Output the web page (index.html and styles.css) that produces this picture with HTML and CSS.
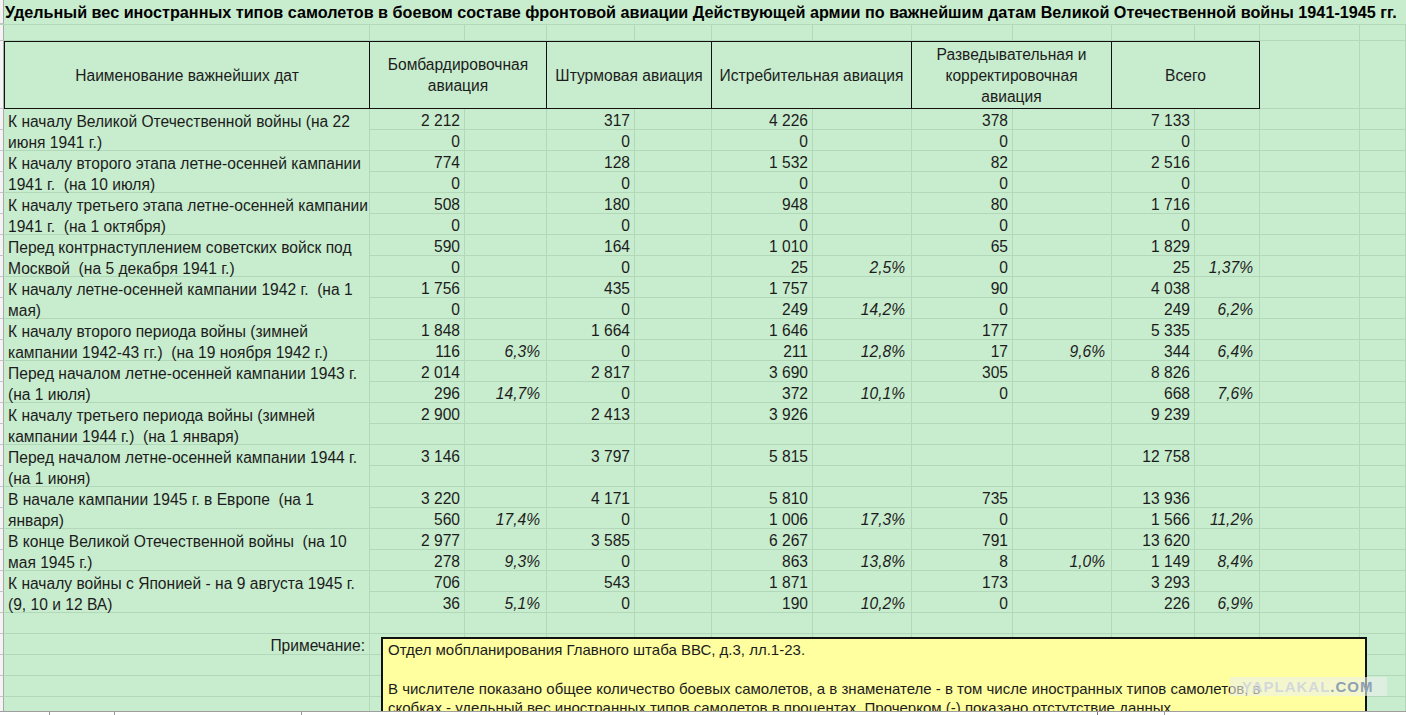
FILE: index.html
```html
<!DOCTYPE html>
<html lang="ru">
<head>
<meta charset="utf-8">
<title>Удельный вес иностранных типов самолетов</title>
<link rel="stylesheet" href="styles.css">
</head>
<body>
<div class="screen">
  <div class="sheet">
    <div class="row title-row">
      <div class="strip"></div>
      <div class="title">Удельный вес иностранных типов самолетов в боевом составе фронтовой авиации Действующей армии по важнейшим датам Великой Отечественной войны 1941-1945 гг.</div>
    </div>
    <div class="row r16">
      <div class="strip"></div><div class="c"></div><div class="c"></div><div class="c"></div><div class="c"></div><div class="c"></div><div class="c"></div><div class="c"></div><div class="c"></div><div class="c"></div><div class="c"></div><div class="c"></div><div class="c"></div><div class="c"></div>
    </div>
    <div class="row head">
      <div class="strip"></div>
      <div class="h first">Наименование важнейших дат</div>
      <div class="h s2">Бомбардировочная<br>авиация</div>
      <div class="h s2">Штурмовая авиация</div>
      <div class="h s2">Истребительная авиация</div>
      <div class="h s2">Разведывательная и<br>корректировочная<br>авиация</div>
      <div class="h s2">Всего</div>
      <div class="c"></div><div class="c"></div>
    </div>

    <div class="grp">
      <div class="strip"></div><div class="lab">К началу Великой Отечественной войны (на 22<br>июня 1941 г.)</div>
      <div class="c n">2 212</div><div class="c p"></div><div class="c n">317</div><div class="c p"></div><div class="c n">4 226</div><div class="c p"></div><div class="c n">378</div><div class="c p"></div><div class="c n">7 133</div><div class="c p"></div><div class="c"></div><div class="c"></div>
      <div class="strip"></div>
      <div class="c n">0</div><div class="c p"></div><div class="c n">0</div><div class="c p"></div><div class="c n">0</div><div class="c p"></div><div class="c n">0</div><div class="c p"></div><div class="c n">0</div><div class="c p"></div><div class="c"></div><div class="c"></div>
    </div>

    <div class="grp">
      <div class="strip"></div><div class="lab">К началу второго этапа летне-осенней кампании<br>1941 г.&nbsp; (на 10 июля)</div>
      <div class="c n">774</div><div class="c p"></div><div class="c n">128</div><div class="c p"></div><div class="c n">1 532</div><div class="c p"></div><div class="c n">82</div><div class="c p"></div><div class="c n">2 516</div><div class="c p"></div><div class="c"></div><div class="c"></div>
      <div class="strip"></div>
      <div class="c n">0</div><div class="c p"></div><div class="c n">0</div><div class="c p"></div><div class="c n">0</div><div class="c p"></div><div class="c n">0</div><div class="c p"></div><div class="c n">0</div><div class="c p"></div><div class="c"></div><div class="c"></div>
    </div>

    <div class="grp">
      <div class="strip"></div><div class="lab">К началу третьего этапа летне-осенней кампании<br>1941 г.&nbsp; (на 1 октября)</div>
      <div class="c n">508</div><div class="c p"></div><div class="c n">180</div><div class="c p"></div><div class="c n">948</div><div class="c p"></div><div class="c n">80</div><div class="c p"></div><div class="c n">1 716</div><div class="c p"></div><div class="c"></div><div class="c"></div>
      <div class="strip"></div>
      <div class="c n">0</div><div class="c p"></div><div class="c n">0</div><div class="c p"></div><div class="c n">0</div><div class="c p"></div><div class="c n">0</div><div class="c p"></div><div class="c n">0</div><div class="c p"></div><div class="c"></div><div class="c"></div>
    </div>

    <div class="grp">
      <div class="strip"></div><div class="lab">Перед контрнаступлением советских войск под<br>Москвой&nbsp; (на 5 декабря 1941 г.)</div>
      <div class="c n">590</div><div class="c p"></div><div class="c n">164</div><div class="c p"></div><div class="c n">1 010</div><div class="c p"></div><div class="c n">65</div><div class="c p"></div><div class="c n">1 829</div><div class="c p"></div><div class="c"></div><div class="c"></div>
      <div class="strip"></div>
      <div class="c n">0</div><div class="c p"></div><div class="c n">0</div><div class="c p"></div><div class="c n">25</div><div class="c p">2,5%</div><div class="c n">0</div><div class="c p"></div><div class="c n">25</div><div class="c p">1,37%</div><div class="c"></div><div class="c"></div>
    </div>

    <div class="grp">
      <div class="strip"></div><div class="lab">К началу летне-осенней кампании 1942 г.&nbsp; (на 1<br>мая)</div>
      <div class="c n">1 756</div><div class="c p"></div><div class="c n">435</div><div class="c p"></div><div class="c n">1 757</div><div class="c p"></div><div class="c n">90</div><div class="c p"></div><div class="c n">4 038</div><div class="c p"></div><div class="c"></div><div class="c"></div>
      <div class="strip"></div>
      <div class="c n">0</div><div class="c p"></div><div class="c n">0</div><div class="c p"></div><div class="c n">249</div><div class="c p">14,2%</div><div class="c n">0</div><div class="c p"></div><div class="c n">249</div><div class="c p">6,2%</div><div class="c"></div><div class="c"></div>
    </div>

    <div class="grp">
      <div class="strip"></div><div class="lab">К началу второго периода войны (зимней<br>кампании 1942-43 гг.)&nbsp; (на 19 ноября 1942 г.)</div>
      <div class="c n">1 848</div><div class="c p"></div><div class="c n">1 664</div><div class="c p"></div><div class="c n">1 646</div><div class="c p"></div><div class="c n">177</div><div class="c p"></div><div class="c n">5 335</div><div class="c p"></div><div class="c"></div><div class="c"></div>
      <div class="strip"></div>
      <div class="c n">116</div><div class="c p">6,3%</div><div class="c n">0</div><div class="c p"></div><div class="c n">211</div><div class="c p">12,8%</div><div class="c n">17</div><div class="c p">9,6%</div><div class="c n">344</div><div class="c p">6,4%</div><div class="c"></div><div class="c"></div>
    </div>

    <div class="grp">
      <div class="strip"></div><div class="lab">Перед началом летне-осенней кампании 1943 г.<br>(на 1 июля)</div>
      <div class="c n">2 014</div><div class="c p"></div><div class="c n">2 817</div><div class="c p"></div><div class="c n">3 690</div><div class="c p"></div><div class="c n">305</div><div class="c p"></div><div class="c n">8 826</div><div class="c p"></div><div class="c"></div><div class="c"></div>
      <div class="strip"></div>
      <div class="c n">296</div><div class="c p">14,7%</div><div class="c n">0</div><div class="c p"></div><div class="c n">372</div><div class="c p">10,1%</div><div class="c n">0</div><div class="c p"></div><div class="c n">668</div><div class="c p">7,6%</div><div class="c"></div><div class="c"></div>
    </div>

    <div class="grp">
      <div class="strip"></div><div class="lab">К началу третьего периода войны (зимней<br>кампании 1944 г.)&nbsp; (на 1 января)</div>
      <div class="c n">2 900</div><div class="c p"></div><div class="c n">2 413</div><div class="c p"></div><div class="c n">3 926</div><div class="c p"></div><div class="c n"></div><div class="c p"></div><div class="c n">9 239</div><div class="c p"></div><div class="c"></div><div class="c"></div>
      <div class="strip"></div>
      <div class="c n"></div><div class="c p"></div><div class="c n"></div><div class="c p"></div><div class="c n"></div><div class="c p"></div><div class="c n"></div><div class="c p"></div><div class="c n"></div><div class="c p"></div><div class="c"></div><div class="c"></div>
    </div>

    <div class="grp">
      <div class="strip"></div><div class="lab">Перед началом летне-осенней кампании 1944 г.<br>(на 1 июня)</div>
      <div class="c n">3 146</div><div class="c p"></div><div class="c n">3 797</div><div class="c p"></div><div class="c n">5 815</div><div class="c p"></div><div class="c n"></div><div class="c p"></div><div class="c n">12 758</div><div class="c p"></div><div class="c"></div><div class="c"></div>
      <div class="strip"></div>
      <div class="c n"></div><div class="c p"></div><div class="c n"></div><div class="c p"></div><div class="c n"></div><div class="c p"></div><div class="c n"></div><div class="c p"></div><div class="c n"></div><div class="c p"></div><div class="c"></div><div class="c"></div>
    </div>

    <div class="grp">
      <div class="strip"></div><div class="lab">В начале кампании 1945 г. в Европе&nbsp; (на 1<br>января)</div>
      <div class="c n">3 220</div><div class="c p"></div><div class="c n">4 171</div><div class="c p"></div><div class="c n">5 810</div><div class="c p"></div><div class="c n">735</div><div class="c p"></div><div class="c n">13 936</div><div class="c p"></div><div class="c"></div><div class="c"></div>
      <div class="strip"></div>
      <div class="c n">560</div><div class="c p">17,4%</div><div class="c n">0</div><div class="c p"></div><div class="c n">1 006</div><div class="c p">17,3%</div><div class="c n">0</div><div class="c p"></div><div class="c n">1 566</div><div class="c p">11,2%</div><div class="c"></div><div class="c"></div>
    </div>

    <div class="grp">
      <div class="strip"></div><div class="lab">В конце Великой Отечественной войны&nbsp; (на 10<br>мая 1945 г.)</div>
      <div class="c n">2 977</div><div class="c p"></div><div class="c n">3 585</div><div class="c p"></div><div class="c n">6 267</div><div class="c p"></div><div class="c n">791</div><div class="c p"></div><div class="c n">13 620</div><div class="c p"></div><div class="c"></div><div class="c"></div>
      <div class="strip"></div>
      <div class="c n">278</div><div class="c p">9,3%</div><div class="c n">0</div><div class="c p"></div><div class="c n">863</div><div class="c p">13,8%</div><div class="c n">8</div><div class="c p">1,0%</div><div class="c n">1 149</div><div class="c p">8,4%</div><div class="c"></div><div class="c"></div>
    </div>

    <div class="grp">
      <div class="strip"></div><div class="lab">К началу войны с Японией - на 9 августа 1945 г.<br>(9, 10 и 12 ВА)</div>
      <div class="c n">706</div><div class="c p"></div><div class="c n">543</div><div class="c p"></div><div class="c n">1 871</div><div class="c p"></div><div class="c n">173</div><div class="c p"></div><div class="c n">3 293</div><div class="c p"></div><div class="c"></div><div class="c"></div>
      <div class="strip"></div>
      <div class="c n">36</div><div class="c p">5,1%</div><div class="c n">0</div><div class="c p"></div><div class="c n">190</div><div class="c p">10,2%</div><div class="c n">0</div><div class="c p"></div><div class="c n">226</div><div class="c p">6,9%</div><div class="c"></div><div class="c"></div>
    </div>

    <div class="row r21">
      <div class="strip"></div><div class="c"></div><div class="c"></div><div class="c"></div><div class="c"></div><div class="c"></div><div class="c"></div><div class="c"></div><div class="c"></div><div class="c"></div><div class="c"></div><div class="c"></div><div class="c"></div><div class="c"></div>
    </div>
    <div class="row r21">
      <div class="strip"></div><div class="c n">Примечание:</div><div class="c"></div><div class="c"></div><div class="c"></div><div class="c"></div><div class="c"></div><div class="c"></div><div class="c"></div><div class="c"></div><div class="c"></div><div class="c"></div><div class="c"></div><div class="c"></div>
    </div>
    <div class="row r21">
      <div class="strip"></div><div class="c"></div><div class="c"></div><div class="c"></div><div class="c"></div><div class="c"></div><div class="c"></div><div class="c"></div><div class="c"></div><div class="c"></div><div class="c"></div><div class="c"></div><div class="c"></div><div class="c"></div>
    </div>
    <div class="row r21">
      <div class="strip"></div><div class="c"></div><div class="c"></div><div class="c"></div><div class="c"></div><div class="c"></div><div class="c"></div><div class="c"></div><div class="c"></div><div class="c"></div><div class="c"></div><div class="c"></div><div class="c"></div><div class="c"></div>
    </div>
    <div class="row r21">
      <div class="strip"></div><div class="c"></div><div class="c"></div><div class="c"></div><div class="c"></div><div class="c"></div><div class="c"></div><div class="c"></div><div class="c"></div><div class="c"></div><div class="c"></div><div class="c"></div><div class="c"></div><div class="c"></div>
    </div>

    <div class="note">
      <p>Отдел мобпланирования Главного штаба ВВС, д.3, лл.1-23.</p>
      <p class="gap">В числителе показано общее количество боевых самолетов, а в знаменателе - в том числе иностранных типов самолетов, в<br>скобках - удельный вес иностранных типов самолетов в процентах. Прочерком (-) показано отстутствие данных.</p>
    </div>
    <div class="watermark"><span class="wm1">YAPLAKAL</span><span class="wm2">.COM</span></div>
  </div>
  <div class="tabbar">
    <div class="tab t1"></div><div class="tab t2"></div><div class="tab t3"></div><div class="tab t4"></div><div class="tab t5"></div><div class="tab t6"></div>
  </div>
</div>
</body>
</html>
```

FILE: styles.css
```css
html, body {
  margin: 0;
  padding: 0;
  background: #c8ecce;
}
body {
  font-family: "Liberation Sans", Arial, sans-serif;
  font-size: 15.6px;
  color: #1c1c1c;
  overflow: hidden;
}
.screen {
  width: 1406px;
  height: 715px;
  display: flex;
  flex-direction: column;
  overflow: hidden;
}
.sheet {
  position: relative;
  height: 711px;
  overflow: hidden;
  background: #c8ecce;
}
.row, .grp {
  display: grid;
  grid-template-columns: 4px 366px 95px 82px 88px 77px 101px 99px 101px 99px 83px 65px 100px 46px;
}
.title-row {
  height: 25px;
  grid-template-columns: 4px 1402px;
  border-bottom: 1px solid #b3d7b9;
  box-sizing: border-box;
}
.title {
  font-weight: bold;
  font-size: 16.2px;
  color: #000;
  line-height: 24px;
  padding-left: 1px;
  white-space: nowrap;
}
.r16 { grid-template-rows: 16px; }
.r21 { grid-template-rows: 21px; }
.head { grid-template-rows: 68px; }
.grp { grid-template-rows: 21px 21px; }

.strip {
  background: #f4f4f4;
  border-right: 1px solid #a9a9a9;
  border-bottom: 1px solid #c4c4c4;
  box-sizing: border-box;
}
.c {
  box-sizing: border-box;
  border-right: 1px solid #b3d7b9;
  border-bottom: 1px solid #b3d7b9;
  padding-top: 3px;
  line-height: 17px;
  white-space: nowrap;
  overflow: visible;
}
.n {
  text-align: right;
  padding-right: 4px;
}
.p {
  text-align: right;
  padding-right: 6px;
  font-style: italic;
}
.lab {
  grid-row: span 2;
  box-sizing: border-box;
  border-right: 1px solid #b3d7b9;
  border-bottom: 1px solid #b3d7b9;
  padding-top: 3px;
  line-height: 20.5px;
  padding-left: 4px;
  white-space: nowrap;
}
.h {
  box-sizing: border-box;
  border-top: 1px solid #111;
  border-right: 1px solid #111;
  border-bottom: 1px solid #111;
  display: flex;
  align-items: center;
  justify-content: center;
  text-align: center;
  line-height: 21px;
  padding-top: 0;
}
.h.first { border-left: 1px solid #111; }
.h.s2 { grid-column: span 2; }
.head .c { padding-top: 0; }

.note {
  position: absolute;
  left: 381px;
  top: 637px;
  width: 986px;
  height: 110px;
  box-sizing: border-box;
  background: #ffffa0;
  border: 2px solid #111;
  padding: 1px 0 0 5px;
  font-size: 15px;
  line-height: 19.5px;
  color: #1c1c1c;
}
.note p { margin: 0; white-space: nowrap; }
.note .gap { margin-top: 19px; }

.watermark {
  position: absolute;
  left: 1230px;
  top: 677px;
  width: 157px;
  height: 19px;
  background: rgba(236, 240, 236, 0.6);
  font-weight: bold;
  font-size: 15px;
  line-height: 19px;
  letter-spacing: 1px;
  padding-left: 12px;
  box-sizing: border-box;
  white-space: nowrap;
}
.wm1 { color: rgba(205, 212, 222, 0.85); }
.wm2 { color: #8ea2b5; }

.tabbar {
  height: 4px;
  background: #ffffff;
  border-top: 1px solid #9e9e9e;
  box-sizing: border-box;
  display: flex;
}
.tab { height: 100%; border-right: 1px solid #9a9a9a; box-sizing: border-box; }
.t1 { width: 50px; }
.t2 { width: 65px; }
.t3 { width: 187px; }
.t4 { width: 100px; border-right: none; }
.t5 { width: 696px; border-right: 1px solid #777; }
.t6 { width: 67px; }
```
